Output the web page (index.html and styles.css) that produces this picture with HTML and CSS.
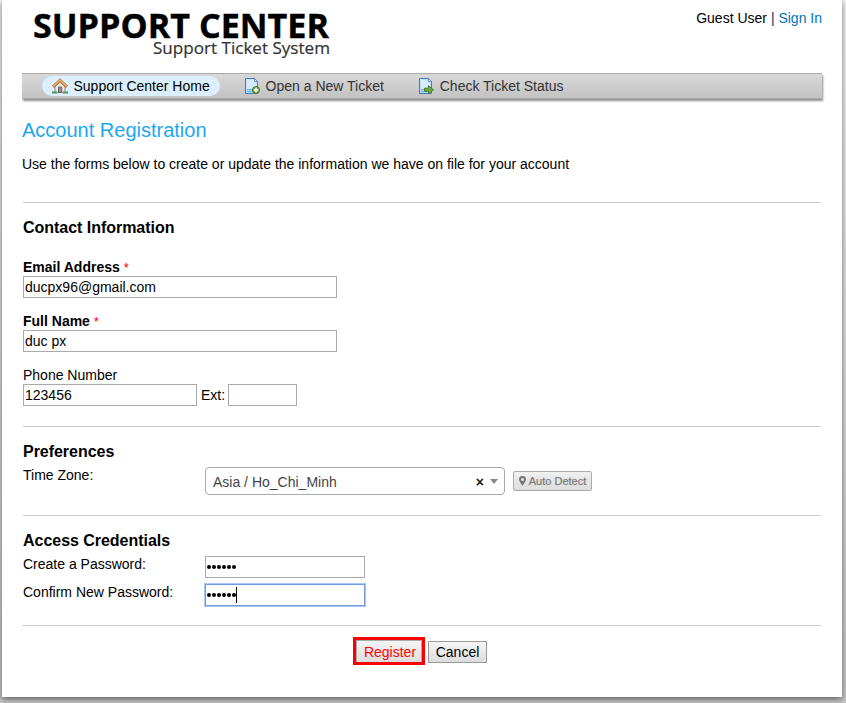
FILE: index.html
```html
<!DOCTYPE html>
<html lang="en">
<head>
<meta charset="utf-8">
<title>Support Center</title>
<link rel="stylesheet" href="styles.css">
</head>
<body>
<div class="container">
  <header class="header">
    <svg class="logo" width="310" height="64" viewBox="0 0 310 64" role="img">
      <text class="logo-title" x="11" y="38" textLength="296" lengthAdjust="spacingAndGlyphs">SUPPORT CENTER</text>
      <text class="logo-sub" x="131" y="54" textLength="177" lengthAdjust="spacingAndGlyphs">Support Ticket System</text>
    </svg>
    <p class="user">Guest User <span class="bar">|</span> <a href="#">Sign In</a></p>
  </header>
  <nav class="nav">
    <a class="nav-item active" href="#">
      <svg width="16" height="16" viewBox="0 0 16 16"><path d="M3 8v6.500h10V8L8 3.500z" fill="#eee9e2" stroke="#8b8580"/><path d="M6.500 14.500V9h3.200v5.500z" fill="#8d9290" stroke="#666"/><path d="M1 8.800L8 2.300l7 6.500" fill="none" stroke="#a36a2c" stroke-width="3"/><path d="M1.200 8.400L8 2.200l6.800 6.200" fill="none" stroke="#e7ae69" stroke-width="1.800"/><path d="M0 14.500h5M11 14.500h5" stroke="#58984b" stroke-width="2"/></svg>
      <span>Support Center Home</span></a>
    <a class="nav-item" href="#">
      <svg width="16" height="16" viewBox="0 0 16 16"><path d="M1.500.5h9l3 3v12h-12z" fill="#b9dbfa" stroke="#4278b6"/><path d="M2.500 1.500h7.500v3h2.500v7h-10z" fill="#d8ebfc"/><path d="M10.500.5v3h3z" fill="#fff" stroke="#4278b6" stroke-width=".7"/><path d="M3 11.500h6M3 13.500h6" stroke="#62adeb"/><circle cx="12" cy="12" r="3.500" fill="#78a94c" stroke="#43772b"/><path d="M12 9.800v4.400M9.800 12h4.400" stroke="#fff" stroke-width="1.500"/></svg>
      <span>Open a New Ticket</span></a>
    <a class="nav-item" href="#">
      <svg width="16" height="16" viewBox="0 0 16 16"><path d="M1.500.5h9l3 3v12h-12z" fill="#b9dbfa" stroke="#4278b6"/><path d="M2.500 1.500h7.500v3h2.500v7h-10z" fill="#d8ebfc"/><path d="M10.500.5v3h3z" fill="#fff" stroke="#4278b6" stroke-width=".7"/><path d="M3 11.500h3M3 13.500h5" stroke="#62adeb"/><path d="M6.500 10.200h4V7.800l5 4-5 4v-2.500h-4z" fill="#72aa43" stroke="#457c2b"/></svg>
      <span>Check Ticket Status</span></a>
  </nav>
  <main class="content">
    <h1>Account Registration</h1>
    <p class="intro">Use the forms below to create or update the information we have on file for your account</p>
    <form>
      <section class="contact">
        <h3>Contact Information</h3>
        <div class="field"><label class="required">Email Address <span>*</span></label><input class="wide" type="text" value="ducpx96@gmail.com"></div>
        <div class="field"><label class="required">Full Name <span>*</span></label><input class="wide" type="text" value="duc px"></div>
        <div class="field"><label>Phone Number</label><div class="phone"><input class="number" type="text" value="123456"><span>Ext:</span><input class="ext" type="text"></div></div>
      </section>
      <section class="preferences">
        <h3>Preferences</h3>
        <div class="row zone"><label>Time Zone:</label>
          <div class="select"><span>Asia / Ho_Chi_Minh</span><b>×</b><i></i></div>
          <button class="detect" type="button"><svg width="7" height="10" viewBox="0 0 7 10"><path fill-rule="evenodd" d="M3.500 0A3.400 3.400 0 0 0 0 3.400C0 5 1 5.500 3.500 10 6 5.500 7 5 7 3.400A3.400 3.400 0 0 0 3.500 0zm0 2a1.500 1.500 0 1 1 0 3 1.500 1.500 0 0 1 0-3z" fill="#777"/></svg><span>Auto Detect</span></button>
        </div>
      </section>
      <section class="credentials">
        <h3>Access Credentials</h3>
        <div class="row"><label>Create a Password:</label><div class="password"><span class="dots"><i></i><i></i><i></i><i></i><i></i><i></i></span></div></div>
        <div class="row"><label>Confirm New Password:</label><div class="password focused"><span class="dots"><i></i><i></i><i></i><i></i><i></i><i></i></span><span class="caret"></span></div></div>
      </section>
      <div class="actions"><div class="highlight"><button class="register" type="button">Register</button></div><button class="cancel" type="button">Cancel</button></div>
    </form>
  </main>
</div>
</body>
</html>
```
FILE: styles.css
```css
* { box-sizing: border-box; }
html { height: 100%; background: linear-gradient(#f4f4f4, #c6c6c6); }
body { margin: 0; height: 703px; overflow: hidden; font: 14px/20px "Liberation Sans", Arial, sans-serif; color: #000; }
.container { width: 840px; height: 697px; margin-left: 2px; padding: 0 20px; background: #fff; box-shadow: 0 2px 6px rgba(0, 0, 0, .55); }
h1, h3, p { margin: 0; font-weight: normal; }
a { color: #0072bc; text-decoration: none; }
.header { height: 73px; display: flex; justify-content: space-between; }
.logo { display: block; }
.logo-title { font: bold 33.5px "Open Sans", sans-serif; stroke: #000; stroke-width: .4px; }
.logo-sub { font: 16.5px "Open Sans", sans-serif; fill: #333; stroke: #333; stroke-width: .2px; }
.user { padding: 8px 0 0; }
.bar { color: #036; }
.nav { height: 26px; width: 800px; display: flex; padding: 2px 0 0 20px; border-top: 1px solid #aaa; background: linear-gradient(#d8d8d8, #c2c2c2); box-shadow: inset 0 -1px 0 #aaa, 1px 2px 2px rgba(0, 0, 0, .45); }
.nav-item { display: flex; align-items: center; height: 20px; padding: 0 10px; margin-right: 14.4px; border-radius: 10px; color: #333; }
.nav-item svg { margin-right: 5.5px; }
.active { color: #000; background: #dbefff; }
h1 { margin-top: 20px; font-size: 20px; line-height: 22px; color: #1ca8ed; }
.intro { margin-top: 13px; }
form { width: 799px; padding-left: 1px; margin-top: 28px; }
section { border-top: 1px solid #ccc; padding-top: 15px; }
h3 { font-size: 16px; line-height: 20px; font-weight: bold; letter-spacing: -.03px; }
.contact { height: 224px; }
.contact h3 { margin-bottom: 20px; }
.field { height: 54px; }
.field label { display: block; height: 18px; line-height: 18px; }
.required { font-weight: bold; }
.required span { color: red; font-weight: normal; font-size: 13px; }
input { display: block; height: 22px; margin: 0; padding: 1px; border: 1px solid #aaa; border-radius: 0; font: 14px "Liberation Sans", Arial, sans-serif; }
.wide { width: 314px; }
.phone { display: flex; line-height: 22px; }
.number { width: 174px; }
.phone span { width: 31px; padding-left: 4px; }
.ext { width: 69px; }
.preferences { height: 89px; }
.row { display: flex; height: 28px; }
.row label { width: 182px; padding-top: 3px; line-height: 20px; }
.select { width: 300px; height: 28px; margin-top: 5px; padding: 0 6px 0 7px; display: flex; align-items: center; border: 1px solid #aaa; border-radius: 4px; color: #444; line-height: 28px; }
.select span { flex: 1; padding-top: 1px; }
.select b { padding-top: 1px; color: #222; font-size: 14px; }
.select i { margin: 1px 0 0 6px; border: solid transparent; border-width: 5px 4px 0; border-top-color: #888; }
.detect { width: 79px; height: 20px; margin: 9px 0 0 8px; padding: 0; display: flex; align-items: center; justify-content: center; gap: 3px; border: 1px solid #aaa; border-radius: 2px; background: linear-gradient(#f0f0f0, #ddd); color: #777; font: 11px "Liberation Sans", Arial, sans-serif; -webkit-text-stroke: .2px #777; }
.credentials { height: 110px; }
.password { width: 160px; height: 22px; margin-top: 5px; padding-left: 1px; display: flex; align-items: center; border: 1px solid #aaa; }
.dots { display: flex; gap: 1px; }
.dots i { width: 4px; height: 4px; border-radius: 50%; background: #000; }
.focused { border-color: #7399dc; box-shadow: 0 0 0 1px #a6c8ff; }
.caret { width: 1px; height: 16px; background: #000; }
.actions { height: 77px; margin-left: -1px; padding: 11px 0 0 331px; display: flex; align-items: flex-start; border-top: 1px solid #ccc; }
.highlight { width: 72px; height: 28px; border: 3px solid red; display: flex; }
.actions button { padding: 0; border: 1px solid #aaa; border-radius: 0; background: linear-gradient(#f5f5f5, #ddd); font: 14px "Liberation Sans", Arial, sans-serif; }
.actions .register { width: 66px; height: 22px; padding: 1px 0 0 2px; border-bottom: 0; color: red; }
.actions .cancel { width: 59px; height: 22px; margin: 4px 0 0 3px; border-color: #999; }
```
